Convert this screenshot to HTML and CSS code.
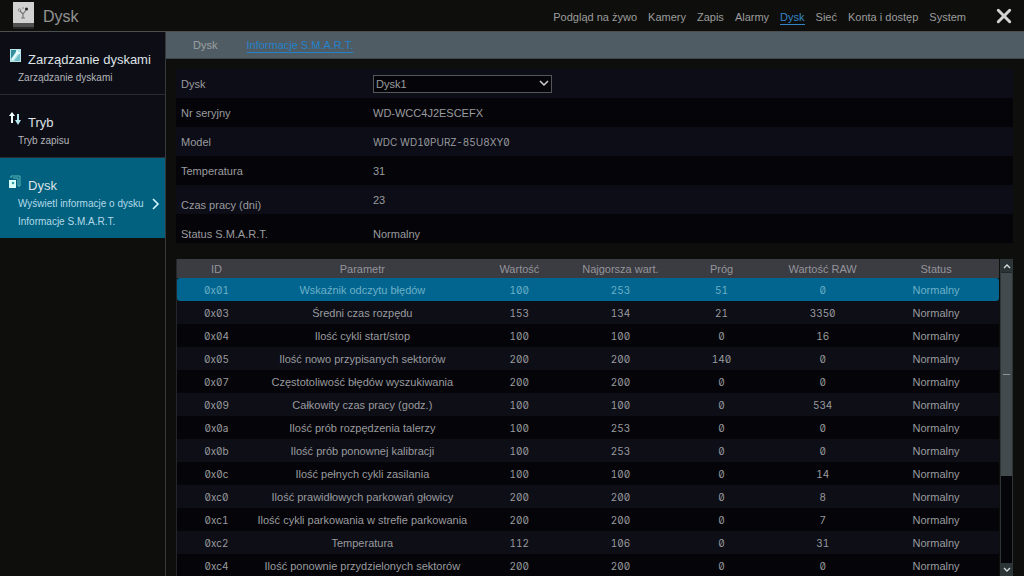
FILE: index.html
```html
<!DOCTYPE html>
<html lang="pl">
<head>
<meta charset="utf-8">
<title>Dysk</title>
<link rel="stylesheet" href="styles.css">
</head>
<body>
<header class="topbar">
  <svg class="logo" viewBox="0 0 21 27" aria-hidden="true">
    <rect width="21" height="21" fill="#d2d2d2"/>
    <rect y="21" width="21" height="4" fill="#505050"/>
    <rect y="25" width="21" height="2" fill="#242424"/>
    <circle cx="6.500" cy="8" r="1.300" fill="none" stroke="#8a8a8a"/>
    <circle cx="13.500" cy="7" r="1.500" fill="#222"/>
    <path d="M7 9l3 3 3-4M10 12v4M8 16h4" fill="none" stroke="#777" stroke-width="1.200"/>
    <path d="M9 6h2" stroke="#888"/>
  </svg>
  <h1 class="page-title">Dysk</h1>
  <nav class="main-nav">
    <a href="#">Podgląd na żywo</a>
    <a href="#">Kamery</a>
    <a href="#">Zapis</a>
    <a href="#">Alarmy</a>
    <a href="#" class="current">Dysk</a>
    <a href="#">Sieć</a>
    <a href="#">Konta i dostęp</a>
    <a href="#">System</a>
  </nav>
  <button class="close" type="button" aria-label="Zamknij">
    <svg viewBox="0 0 14 14"><path d="M2 2l10 10M12 2L2 12" stroke="#d4d4d4" stroke-width="2.600" stroke-linecap="round"/></svg>
  </button>
</header>
<div class="layout">
  <aside class="sidebar">
    <section class="side-item">
      <svg class="side-icon" viewBox="0 0 12 14" aria-hidden="true">
        <rect x="1" width="11" height="13" fill="#b4e6ea"/>
        <path d="M2 10V1h6z" fill="#348c9b"/>
        <path d="M5 12l6-8v8z" fill="#74bcc7"/>
        <path d="M3 11l6-8M8 1v3h3" fill="none" stroke="#efffff" stroke-width="1.500"/>
      </svg>
      <div class="side-text">
        <h2>Zarządzanie dyskami</h2>
        <a href="#">Zarządzanie dyskami</a>
      </div>
    </section>
    <section class="side-item">
      <svg class="side-icon" viewBox="0 0 12 14" aria-hidden="true">
        <path d="M3 0L0 4h2v7h2V4h2z" fill="#f2ffff"/>
        <path d="M9 13l3-5h-2V2H8v6H6z" fill="#b5e8ee"/>
      </svg>
      <div class="side-text">
        <h2>Tryb</h2>
        <a href="#">Tryb zapisu</a>
      </div>
    </section>
    <section class="side-item active">
      <svg class="side-icon" viewBox="0 0 12 14" aria-hidden="true">
        <path d="M2 3V1h9v10H9M4 3h5v8" fill="none" stroke="#5fb9b7"/>
        <rect y="5" width="7" height="8" fill="#d9fffa"/>
        <circle cx="4" cy="8" r="1.300" fill="#33a0a0"/>
      </svg>
      <div class="side-text">
        <h2>Dysk</h2>
        <a href="#">Wyświetl informacje o dysku</a>
        <a href="#">Informacje S.M.A.R.T.</a>
      </div>
      <svg class="chevron" viewBox="0 0 8 12" aria-hidden="true"><path d="M1 1l5 5-5 5" fill="none" stroke="#d5f5ff" stroke-width="1.600"/></svg>
    </section>
  </aside>
  <main class="content">
    <nav class="tabs">
      <a href="#">Dysk</a>
      <a href="#" class="current">Informacje S.M.A.R.T.</a>
    </nav>
    <div class="panel">
      <dl class="info">
        <div><dt><label for="disk">Dysk</label></dt><dd><select id="disk"><option>Dysk1</option></select></dd></div>
        <div><dt>Nr seryjny</dt><dd>WD-WCC4J2ESCEFX</dd></div>
        <div><dt>Model</dt><dd class="slashed">WDC WD10PURZ-85U8XY0</dd></div>
        <div><dt>Temperatura</dt><dd>31</dd></div>
        <div><dt class="low">Czas pracy (dni)</dt><dd>23</dd></div>
        <div><dt class="low">Status S.M.A.R.T.</dt><dd class="low">Normalny</dd></div>
      </dl>
      <div class="table-box">
        <table class="smart">
          <colgroup><col class="c-id"><col class="c-name"><col class="c-num"><col class="c-num"><col class="c-num"><col class="c-num"><col></colgroup>
          <thead><tr><th>ID</th><th>Parametr</th><th>Wartość</th><th>Najgorsza wart.</th><th>Próg</th><th>Wartość RAW</th><th>Status</th></tr></thead>
          <tbody>
            <tr class="selected"><td>0x01</td><td>Wskaźnik odczytu błędów</td><td>100</td><td>253</td><td>51</td><td>0</td><td>Normalny</td></tr>
            <tr><td>0x03</td><td>Średni czas rozpędu</td><td>153</td><td>134</td><td>21</td><td>3350</td><td>Normalny</td></tr>
            <tr><td>0x04</td><td>Ilość cykli start/stop</td><td>100</td><td>100</td><td>0</td><td>16</td><td>Normalny</td></tr>
            <tr><td>0x05</td><td>Ilość nowo przypisanych sektorów</td><td>200</td><td>200</td><td>140</td><td>0</td><td>Normalny</td></tr>
            <tr><td>0x07</td><td>Częstotoliwość błędów wyszukiwania</td><td>200</td><td>200</td><td>0</td><td>0</td><td>Normalny</td></tr>
            <tr><td>0x09</td><td>Całkowity czas pracy (godz.)</td><td>100</td><td>100</td><td>0</td><td>534</td><td>Normalny</td></tr>
            <tr><td>0x0a</td><td>Ilość prób rozpędzenia talerzy</td><td>100</td><td>253</td><td>0</td><td>0</td><td>Normalny</td></tr>
            <tr><td>0x0b</td><td>Ilość prób ponownej kalibracji</td><td>100</td><td>253</td><td>0</td><td>0</td><td>Normalny</td></tr>
            <tr><td>0x0c</td><td>Ilość pełnych cykli zasilania</td><td>100</td><td>100</td><td>0</td><td>14</td><td>Normalny</td></tr>
            <tr><td>0xc0</td><td>Ilość prawidłowych parkowań głowicy</td><td>200</td><td>200</td><td>0</td><td>8</td><td>Normalny</td></tr>
            <tr><td>0xc1</td><td>Ilość cykli parkowania w strefie parkowania</td><td>200</td><td>200</td><td>0</td><td>7</td><td>Normalny</td></tr>
            <tr><td>0xc2</td><td>Temperatura</td><td>112</td><td>106</td><td>0</td><td>31</td><td>Normalny</td></tr>
            <tr><td>0xc4</td><td>Ilość ponownie przydzielonych sektorów</td><td>200</td><td>200</td><td>0</td><td>0</td><td>Normalny</td></tr>
          </tbody>
        </table>
        <div class="scrollbar">
          <button type="button" aria-label="W górę"><svg viewBox="0 0 8 5"><path d="M1 4l3-3 3 3" fill="none" stroke="#d8dede" stroke-width="1.300"/></svg></button>
          <div class="track"><div class="thumb"></div></div>
          <button type="button" aria-label="W dół"><svg viewBox="0 0 8 5"><path d="M1 1l3 3 3-3" fill="none" stroke="#d8dede" stroke-width="1.300"/></svg></button>
        </div>
      </div>
    </div>
  </main>
</div>
</body>
</html>
```
FILE: styles.css
```css
* { box-sizing: border-box; }

body {
  margin: 0;
  height: 100vh;
  overflow: hidden;
  display: flex;
  flex-direction: column;
  background: #0e0f0d;
  color: #9a9b9f;
  font-family: "Liberation Sans", Arial, sans-serif;
  font-size: 11px;
  line-height: 16px;
}

h1, h2, dl, dt, dd { margin: 0; font-weight: 400; }
a { color: inherit; text-decoration: none; }
button { padding: 0; border: 0; background: none; display: flex; align-items: center; justify-content: center; }

.topbar {
  display: flex;
  align-items: center;
  flex: none;
  height: 32px;
  padding: 0 12px 0 13px;
  border-bottom: 1px solid #4b4f50;
}
.logo { width: 21px; height: 27px; margin-right: 9px; }
.page-title { font-size: 16px; line-height: 20px; padding-top: 2px; color: #929292; }
.main-nav { display: flex; gap: 11px; margin-left: auto; padding-top: 2px; color: #9c9c9c; }
.main-nav .current { color: #3584c4; border-bottom: 1px solid #3584c4; height: 16px; }
.close { width: 16px; height: 16px; margin: 1px 0 0 30px; }
.close svg { width: 16px; height: 16px; flex: none; }

.layout { display: flex; flex: 1; min-height: 0; }

.sidebar { width: 166px; flex: none; border-right: 1px solid #36383a; }
.side-item {
  display: flex;
  padding: 19px 5px 7px 9px;
  background: #0c0d15;
  border-bottom: 1px solid #2a2c34;
}
.side-item.active { background: #01617f; border: 0; color: #c5e2ec; }
.side-icon { width: 12px; height: 14px; flex: none; margin-top: -2px; }
.side-text { flex: 1; display: flex; flex-direction: column; white-space: nowrap; }
.side-text h2 { padding-left: 7px; font-size: 13px; line-height: 18px; color: #dfe2e6; }
.side-text a { margin-left: -3px; font-size: 10px; line-height: 18px; color: #b4b6bb; }
.active .side-text a { color: #b3dae8; }
.chevron { width: 8px; height: 12px; align-self: center; flex: none; }

.content { flex: 1; min-width: 0; display: flex; flex-direction: column; }
.tabs {
  flex: none;
  display: flex;
  gap: 29px;
  height: 27px;
  padding: 5px 27px;
  background: #505c63;
  border-bottom: 1px solid #3c4549;
  color: #9ba1a4;
}
.tabs .current { color: #2481cb; text-decoration: underline; text-underline-offset: 3px; }

.panel { flex: 1; min-height: 0; display: flex; flex-direction: column; gap: 16px; padding: 10px 11px 0 10px; }

.info > div { display: grid; grid-template-columns: 192px 1fr; align-items: center; height: 29px; padding-left: 5px; background: #050509; }
.info > div:nth-child(odd) { background: #0c0d16; }
.info .low { padding-top: 10px; }
.info select {
  display: block;
  width: 179px;
  height: 18px;
  padding: 0 2px;
  border: 1px solid #55575b;
  border-radius: 0;
  appearance: none;
  background: #050509 url("data:image/svg+xml,%3Csvg xmlns='http://www.w3.org/2000/svg' viewBox='0 0 10 7'%3E%3Cpath d='M1 1l4 4 4-4' fill='none' stroke='%23d0d0d0' stroke-width='1.500'/%3E%3C/svg%3E") no-repeat right 2px center / 10px 7px;
  color: inherit;
  font: inherit;
}

.slashed,
.smart td:not(:nth-child(2)):not(:last-child) {
  font-family: Inter, "Liberation Sans", sans-serif;
  font-size: 10px;
  font-feature-settings: "zero", "tnum";
}

.table-box { flex: 1; min-height: 0; display: flex; gap: 1px; overflow: hidden; border-left: 1px solid #25262a; }
.smart { flex: 1; table-layout: fixed; border-collapse: collapse; align-self: flex-start; text-align: center; white-space: nowrap; }
.c-id { width: 9.6%; }
.c-name { width: 25.9%; }
.c-num { width: 12.3%; }
.smart th { height: 19px; padding: 0; background: #3b3b42; color: #94959a; font-weight: 400; }
.smart td { height: 23px; padding: 0; background: #050509; }
.smart tr:nth-child(even) td { background: #0d0e16; }
.smart tr.selected td { background: #01658f; color: #6cb0c8; }
.selected td:first-child { border-radius: 3px 0 0 3px; }
.selected td:last-child { border-radius: 0 3px 3px 0; }

.scrollbar { width: 13px; flex: none; display: flex; flex-direction: column; background: #050509; border: 1px solid #303638; }
.scrollbar button { height: 12px; flex: none; background: #2b3436; }
.scrollbar svg { width: 8px; height: 5px; }
.track { flex: 1; }
.thumb {
  height: 70%;
  background: linear-gradient(#8c9696, #8c9696) center / 7px 1px no-repeat #414b4d;
  border-top: 1px solid #20282a;
}
```
